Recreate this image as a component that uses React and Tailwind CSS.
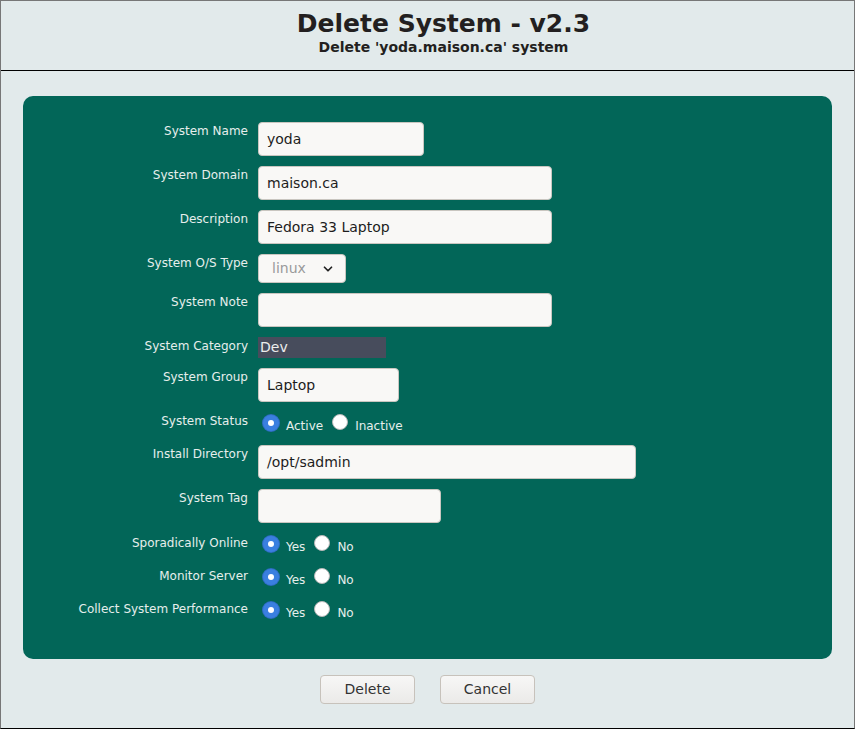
import React from 'react';
import { ChevronDown } from 'lucide-react';

const Label = ({ children, className = '' }) => (
  <div className={`text-right text-[12px] leading-4 text-[#e6eeec] ${className}`}>{children}</div>
);

const TextBox = ({ value = '', width }) => (
  <div
    className={`h-[34px] ${width} rounded-[4px] border border-[#c9c6c0] bg-[#f9f8f6] px-[8px] flex items-center text-[14px] text-[#1d1d1d]`}
  >
    {value}
  </div>
);

const Radio = ({ checked }) =>
  checked ? (
    <span className="block w-4 h-4 rounded-full bg-[#3a7fe0] flex items-center justify-center shadow-[0_0_0_1px_#2f6cc2]">
      <span className="block w-[6px] h-[6px] rounded-full bg-white" />
    </span>
  ) : (
    <span className="block w-4 h-4 rounded-full bg-white border border-[#b8b8b8]" />
  );

const RadioPair = ({ a, b }) => (
  <div className="h-[23px] flex items-start text-[12px] text-[#e6eeec]">
    <span className="mt-[3px] ml-[5px]">
      <Radio checked />
    </span>
    <span className="ml-[7px] mt-[6px] leading-4">{a}</span>
    <span className="mt-[2px] ml-[9px]">
      <Radio />
    </span>
    <span className="ml-[7px] mt-[6px] leading-4">{b}</span>
  </div>
);

const Button = ({ children }) => (
  <button className="h-[29px] w-[95px] rounded-[4px] border border-[#c7c2bb] bg-gradient-to-b from-[#f7f7f6] to-[#ebeae8] text-[14px] text-[#333]">
    {children}
  </button>
);

export default function App() {
  return (
    <div className="w-[855px] h-[729px] border border-[#777] border-b-black bg-[#e2eaeb] font-['DejaVu_Sans',sans-serif] flex flex-col">
      <div className="h-[70px] border-b border-black flex flex-col items-center pl-[32px] pt-[8px] text-[#231f20] shrink-0">
        <div className="text-[25px] leading-[30px] font-bold">Delete System - v2.3</div>
        <div className="text-[14px] leading-4 font-bold">Delete 'yoda.maison.ca' system</div>
      </div>

      <div className="mt-[25px] ml-[22px] w-[809px] h-[563px] rounded-[10px] bg-[#026658] pt-[26px]">
        <div className="grid grid-cols-[225px_1fr] gap-x-[10px] gap-y-[10px] items-start">
          <Label className="pt-[1px]">System Name</Label>
          <TextBox value="yoda" width="w-[166px]" />

          <Label className="pt-[1px]">System Domain</Label>
          <TextBox value="maison.ca" width="w-[294px]" />

          <Label className="pt-[1px]">Description</Label>
          <TextBox value="Fedora 33 Laptop" width="w-[294px]" />

          <Label className="pt-[1px]">System O/S Type</Label>
          <div className="h-[29px] w-[88px] rounded-[4px] border border-[#c9c6c0] bg-[#f9f8f6] flex items-center justify-between pl-[13px] pr-[10px] text-[14px] text-[#9a9a9a]">
            <span>linux</span>
            <ChevronDown className="w-[14px] h-[14px] text-[#222]" strokeWidth={3} />
          </div>

          <Label className="pt-[1px]">System Note</Label>
          <TextBox width="w-[294px]" />

          <Label className="pt-[1px]">System Category</Label>
          <div className="h-[21px] w-[128px] bg-[#474c5c] text-[14px] text-[#ececec] pl-[2px] leading-[21px]">Dev</div>

          <Label className="pt-[1px]">System Group</Label>
          <TextBox value="Laptop" width="w-[141px]" />

          <Label className="pt-[1px]">System Status</Label>
          <RadioPair a="Active" b="Inactive" />

          <Label className="pt-[1px]">Install Directory</Label>
          <TextBox value="/opt/sadmin" width="w-[378px]" />

          <Label className="pt-[1px]">System Tag</Label>
          <TextBox width="w-[183px]" />

          <Label className="pt-[2px]">Sporadically Online</Label>
          <RadioPair a="Yes" b="No" />

          <Label className="pt-[2px]">Monitor Server</Label>
          <RadioPair a="Yes" b="No" />

          <Label className="pt-[2px]">Collect System Performance</Label>
          <RadioPair a="Yes" b="No" />
        </div>
      </div>

      <div className="mt-[16px] flex justify-center gap-[25px]">
        <Button>Delete</Button>
        <Button>Cancel</Button>
      </div>
    </div>
  );
}
